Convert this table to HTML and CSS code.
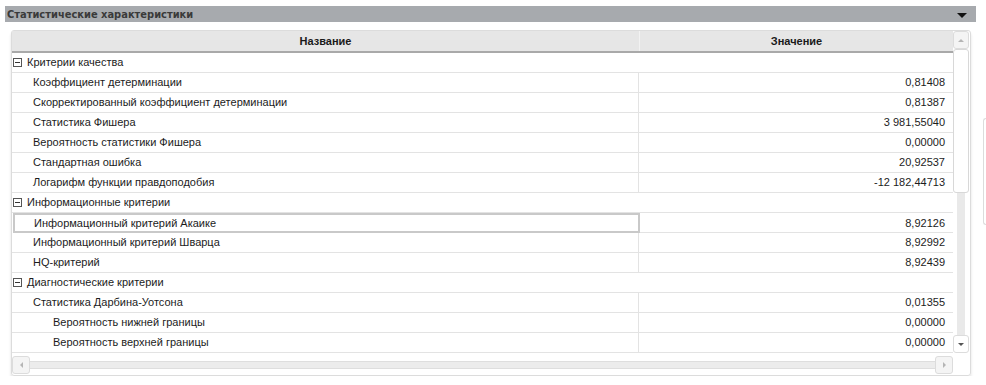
FILE: index.html
```html
<!DOCTYPE html>
<html lang="ru">
<head>
  <meta charset="UTF-8">
  <title>Статистические характеристики</title>
  <link rel="stylesheet" href="styles.css">
</head>
<body>
  <div class="page">
    <div class="main">
      <div class="title-bar">
        <span class="title">Статистические характеристики</span>
        <span class="caret"></span>
      </div>

      <div class="panel">
        <div class="panel-body">
          <div class="grid">
            <div class="head">
              <div class="cell name">Название</div>
              <div class="cell value">Значение</div>
            </div>

            <!-- Критерии качества -->
            <div class="row group"><span class="toggle"></span>Критерии качества</div>
            <div class="row"><div class="cell name lvl1">Коэффициент детерминации</div><div class="cell value">0,81408</div></div>
            <div class="row"><div class="cell name lvl1">Скорректированный коэффициент детерминации</div><div class="cell value">0,81387</div></div>
            <div class="row"><div class="cell name lvl1">Статистика Фишера</div><div class="cell value">3 981,55040</div></div>
            <div class="row"><div class="cell name lvl1">Вероятность статистики Фишера</div><div class="cell value">0,00000</div></div>
            <div class="row"><div class="cell name lvl1">Стандартная ошибка</div><div class="cell value">20,92537</div></div>
            <div class="row"><div class="cell name lvl1">Логарифм функции правдоподобия</div><div class="cell value">-12 182,44713</div></div>

            <!-- Информационные критерии -->
            <div class="row group"><span class="toggle"></span>Информационные критерии</div>
            <div class="row selected"><div class="cell name lvl1">Информационный критерий Акаике</div><div class="cell value">8,92126</div></div>
            <div class="row"><div class="cell name lvl1">Информационный критерий Шварца</div><div class="cell value">8,92992</div></div>
            <div class="row"><div class="cell name lvl1">HQ-критерий</div><div class="cell value">8,92439</div></div>

            <!-- Диагностические критерии -->
            <div class="row group"><span class="toggle"></span>Диагностические критерии</div>
            <div class="row"><div class="cell name lvl1">Статистика Дарбина-Уотсона</div><div class="cell value">0,01355</div></div>
            <div class="row"><div class="cell name lvl2">Вероятность нижней границы</div><div class="cell value">0,00000</div></div>
            <div class="row"><div class="cell name lvl2">Вероятность верхней границы</div><div class="cell value">0,00000</div></div>
          </div>

          <div class="vscroll">
            <div class="sbtn up"><span class="arr-up"></span></div>
            <div class="vthumb"></div>
            <div class="vtrack"></div>
            <div class="sbtn down"><span class="arr-down"></span></div>
          </div>
        </div>

        <div class="hscroll">
          <div class="sbtn left"><span class="arr-left"></span></div>
          <div class="htrack"></div>
          <div class="sbtn right"><span class="arr-right"></span></div>
        </div>
      </div>
    </div>

    <div class="side"></div>
  </div>
</body>
</html>
```

FILE: styles.css
```css
body {
  margin: 0;
  background: #fff;
  font-family: "Liberation Sans", Arial, sans-serif;
  font-size: 11px;
  color: #1c1c1c;
  overflow: hidden;
}
.page {
  display: flex;
  padding-top: 6px;
}
.main {
  flex-shrink: 0;
  width: 971px;
  padding-left: 5px;
}
.title-bar {
  height: 16px;
  background: #a7aaae;
  display: flex;
  align-items: center;
  justify-content: space-between;
  padding: 0 9px 0 2px;
}
.title {
  font-family: "DejaVu Sans Condensed", "DejaVu Sans", sans-serif;
  font-weight: bold;
  font-size: 11px;
  color: #3a3a3a;
}
.caret {
  width: 0;
  height: 0;
  border-left: 5px solid transparent;
  border-right: 5px solid transparent;
  border-top: 5px solid #111;
  margin-top: 2px;
}
.panel {
  margin: 8px 0 0 6px;
  width: 958px;
  border: 1px solid #dcdcdc;
  border-radius: 3px;
  box-shadow: 0 3px 3px rgba(0, 0, 0, 0.12);
  padding-bottom: 1px;
}
.panel-body {
  display: flex;
}
.grid {
  width: 941px;
}
.head {
  display: flex;
  height: 20px;
  background: #e6e6e6;
  border-bottom: 2px solid #a9a9a9;
  font-weight: bold;
  color: #1a1a1a;
}
.head .cell {
  text-align: center;
  line-height: 20px;
}
.head .name {
  border-right: 1px solid #f2f2f2;
}
.cell.name {
  width: 627px;
}
.cell.value {
  flex: 1;
}
.row {
  display: flex;
  height: 19px;
  border-bottom: 1px solid #e3e3e3;
  line-height: 19px;
}
.row .cell.name {
  border-right: 1px solid #e3e3e3;
}
.row .cell.value {
  text-align: right;
  padding-right: 8px;
}
.lvl1 {
  padding-left: 21px;
  box-sizing: border-box;
}
.lvl2 {
  padding-left: 41px;
  box-sizing: border-box;
}
.group {
  align-items: center;
  padding-left: 1px;
}
.toggle {
  width: 7px;
  height: 7px;
  border: 1px solid #555;
  margin-right: 5px;
  position: relative;
}
.toggle::after {
  content: "";
  position: absolute;
  left: 1px;
  right: 1px;
  top: 3px;
  height: 1px;
  background: #333;
}
.row.selected {
  height: 20px;
  border-bottom: none;
}
.row.selected .cell.name {
  box-sizing: border-box;
  margin-left: 1px;
  width: 627px;
  border: 2px solid #c9c9c9;
  line-height: 16px;
  padding-left: 19px;
}
.row.selected .cell.value {
  line-height: 20px;
  border-bottom: 1px solid #e3e3e3;
}

/* scrollbars */
.vscroll {
  width: 16px;
  display: flex;
  flex-direction: column;
  align-items: center;
}
.sbtn {
  box-sizing: border-box;
  width: 16px;
  height: 18px;
  border: 1px solid #dcdcdc;
  border-radius: 3px;
  background: #f4f4f4;
  display: flex;
  align-items: center;
  justify-content: center;
}
.sbtn.down {
  background: #fff;
}
.vthumb {
  box-sizing: border-box;
  width: 16px;
  height: 144px;
  border: 1px solid #d8d8d8;
  border-radius: 3px;
  background: #fff;
}
.vtrack {
  width: 8px;
  flex: 1;
  background: #e9e9e9;
}
.arr-up, .arr-down, .arr-left, .arr-right {
  width: 0;
  height: 0;
}
.arr-up {
  border-left: 3px solid transparent;
  border-right: 3px solid transparent;
  border-bottom: 3px solid #b5b5b5;
}
.arr-down {
  border-left: 3px solid transparent;
  border-right: 3px solid transparent;
  border-top: 3px solid #555;
}
.arr-left {
  border-top: 3px solid transparent;
  border-bottom: 3px solid transparent;
  border-right: 3px solid #b5b5b5;
}
.arr-right {
  border-top: 3px solid transparent;
  border-bottom: 3px solid transparent;
  border-left: 3px solid #b5b5b5;
}
.hscroll {
  display: flex;
  align-items: center;
  width: 941px;
  margin-top: 3px;
  height: 18px;
}
.hscroll .sbtn {
  width: 18px;
  height: 18px;
}
.htrack {
  flex: 1;
  height: 6px;
  border-top: 1px solid #dedede;
  border-bottom: 1px solid #dedede;
  background: #ececec;
}
.side {
  flex-shrink: 0;
  margin-top: 112px;
  margin-left: 7px;
  width: 10px;
  height: 105px;
  border: 1px solid #dcdcdc;
  border-right: none;
  border-radius: 3px 0 0 3px;
}
```
